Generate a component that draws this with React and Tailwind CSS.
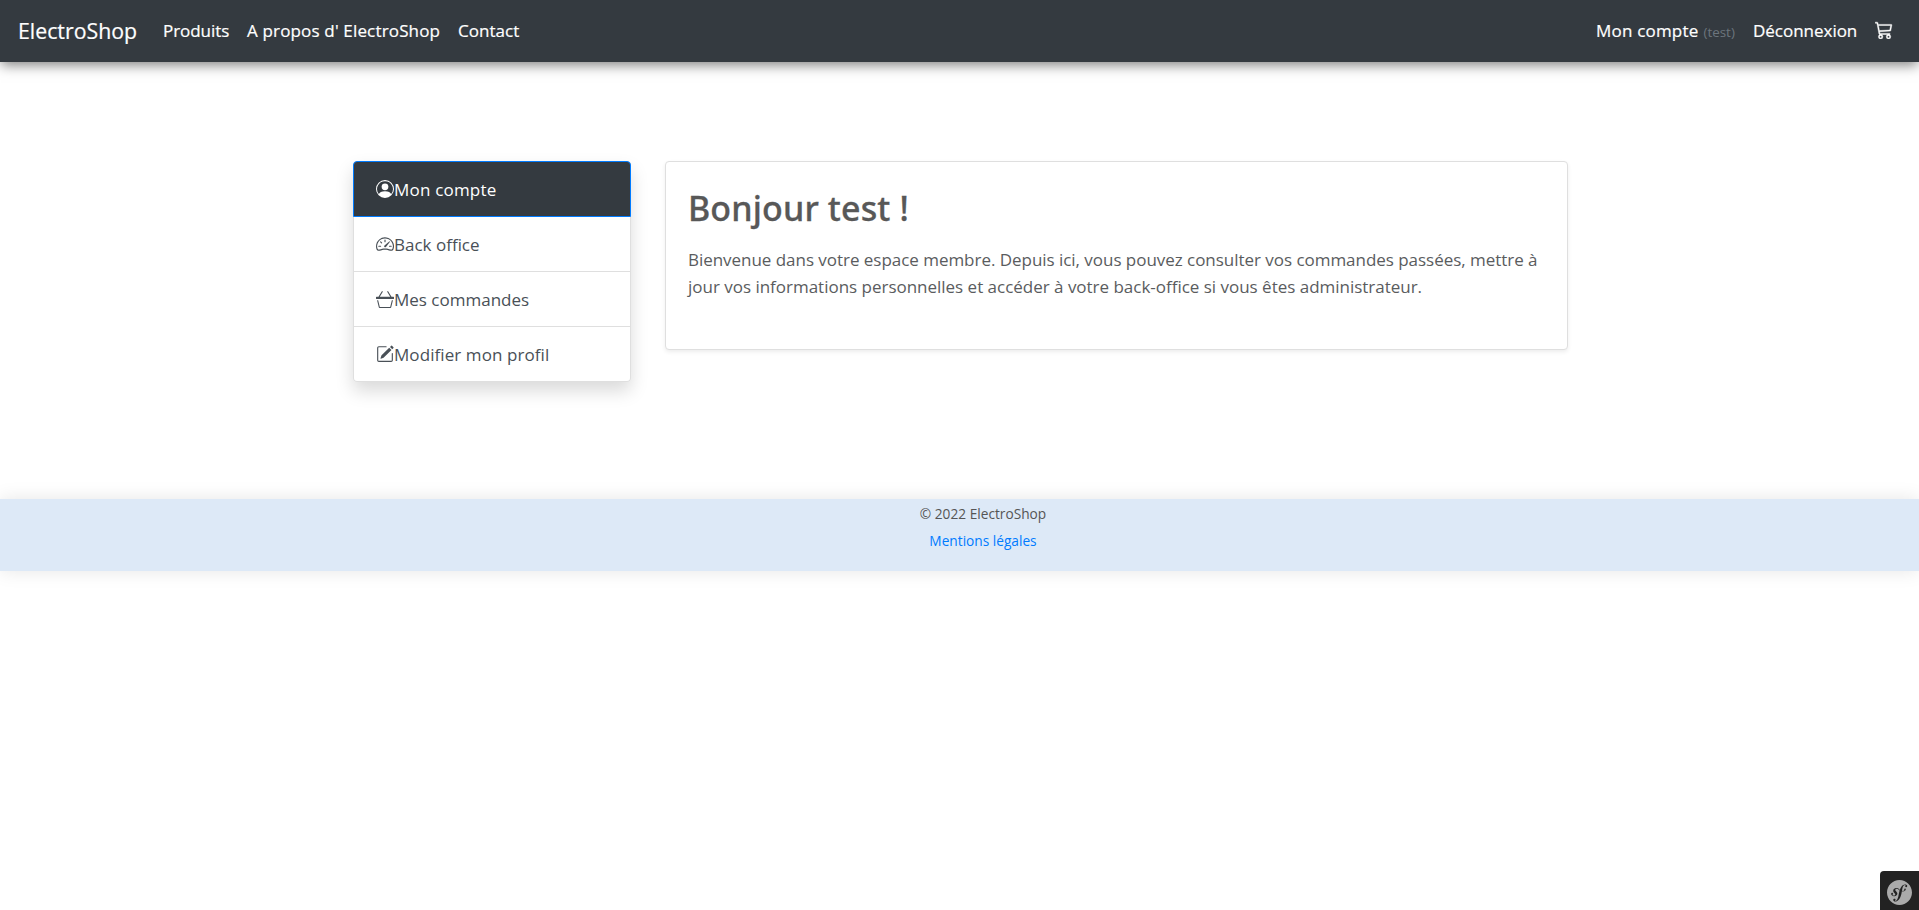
import { BsCart3, BsPersonCircle, BsSpeedometer2, BsBasket3, BsPencilSquare } from "react-icons/bs";
import { SiSymfony } from "react-icons/si";

const items = [
  { label: "Mon compte", Icon: BsPersonCircle, text: "tracking-[0.2px]" },
  { label: "Back office", Icon: BsSpeedometer2, text: "" },
  { label: "Mes commandes", Icon: BsBasket3, text: "" },
  { label: "Modifier mon profil", Icon: BsPencilSquare, text: "tracking-[0.08px]" },
];

function Navbar() {
  return (
    <nav className="relative flex h-[62px] items-center whitespace-nowrap bg-[#343a40] pb-px pl-[18px] pr-[26px] text-[17px] leading-[27px] text-white shadow-[0_4px_12px_-1px_rgba(0,0,0,0.5)]">
      <a href="#" className="w-[145px] text-[21.3px] leading-[34px] [-webkit-text-stroke:0.2px_white]">ElectroShop</a>
      <div className="flex grow gap-[18px] [-webkit-text-stroke:0.2px_white]">
        <a href="#" className="w-[66px] tracking-[-0.05px]">Produits</a>
        <a href="#" className="w-[193px] tracking-[0.16px]">A propos d' ElectroShop</a>
        <a href="#" className="tracking-[0.05px]">Contact</a>
      </div>
      <div className="flex items-center">
        <a href="#" className="flex w-[157px] items-baseline">
          <span className="tracking-[0.2px] [-webkit-text-stroke:0.2px_white]">Mon compte</span>
          <span className="ml-[5px] text-[13.4px] leading-5 text-[#6c757d]">(test)</span>
        </a>
        <a href="#" className="w-[122px] tracking-[-0.02px] [-webkit-text-stroke:0.2px_white]">Déconnexion</a>
        <a href="#" aria-label="Panier" className="-mt-px"><BsCart3 className="size-[18px] stroke-white stroke-[0.4]" /></a>
      </div>
    </nav>
  );
}

function Sidebar() {
  return (
    <div className="h-[221px] w-[278px] rounded bg-white text-[17px] text-[#495057] shadow-[0_9px_18px_rgba(0,0,0,0.15)]">
      {items.map(({ label, Icon, text }, i) => (
        <a
          key={label}
          href="#"
          className={
            "flex items-center px-[22px] leading-[27px] " +
            (i === 0
              ? "h-14 rounded-t border border-[#007bff] bg-[#343a40] text-white"
              : "h-[55px] border-x border-b border-[#dfdfdf] last:rounded-b")
          }
        >
          <Icon className="size-[18px] shrink-0" />
          <span className={text}>{label}</span>
        </a>
      ))}
    </div>
  );
}

function Welcome() {
  return (
    <section className="h-[189px] w-[903px] rounded border border-[#dfdfdf] bg-white px-[22px] pt-[25px] text-[#5a5c5e] shadow-[0_2px_4.5px_rgba(0,0,0,0.075)]">
      <h1 className="font-['Noto_Sans'] text-[34px] font-medium leading-[43px] tracking-[0.13px] text-[#585858] [-webkit-text-stroke:0.3px_#585858]">Bonjour test !</h1>
      <p className="mt-4 whitespace-nowrap text-[17px] leading-[27px]">
        <span className="tracking-[-0.035px]">
          Bienvenue dans votre espace membre. Depuis ici, vous pouvez consulter vos commandes passées, mettre à
        </span>
        <br />
        <span className="tracking-[-0.015px]">
          jour vos informations personnelles et accéder à votre back-office si vous êtes administrateur.
        </span>
      </p>
    </section>
  );
}

export default function App() {
  return (
    <div className="min-h-screen overflow-hidden bg-white font-['Open_Sans',sans-serif]">
      <Navbar />
      <main className="flex h-[437px] items-start gap-[34px] pl-[353px] pt-[99px]">
        <Sidebar />
        <Welcome />
      </main>
      <footer className="flex h-[72px] flex-col items-center bg-[#dde9f7] pl-[47px] pt-px text-[13.7px] leading-[27px] text-[#555] shadow-[0_0_18px_rgba(0,0,0,0.1)]">
        <p>© 2022 ElectroShop</p>
        <a href="#" className="text-[#007bff]">Mentions légales</a>
      </footer>
      <button aria-label="Symfony" className="fixed bottom-0 right-0 flex size-[39px] items-center justify-center rounded-tl bg-[#222] pt-1 text-[#aaa]">
        <SiSymfony className="size-[25px]" />
      </button>
    </div>
  );
}
